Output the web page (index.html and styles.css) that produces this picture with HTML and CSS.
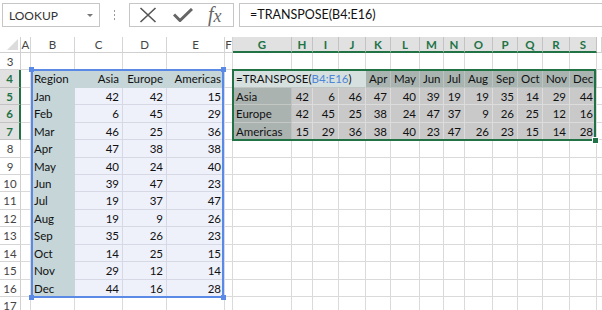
FILE: index.html
```html
<!DOCTYPE html>
<html>
<head>
<meta charset="utf-8">
<link rel="stylesheet" href="styles.css">
</head>
<body>
<div class="fbar">
  <div class="namebox"><span>LOOKUP</span><span class="caret"></span></div>
  <div class="grip"><span></span><span></span><span></span></div>
  <div class="btns">
    <svg class="ic-x" width="18" height="16" viewBox="0 0 18 16"><path d="M1.5 1 L16.5 15 M16.5 1 L1.5 15" stroke="#555" stroke-width="1.6" fill="none"/></svg>
    <svg class="ic-ok" width="20" height="14" viewBox="0 0 20 14"><path d="M1 6.5 L7 12.5 L19 1" stroke="#666" stroke-width="3" fill="none"/></svg>
    <span class="fx">f<i>x</i></span>
  </div>
  <div class="formula">=TRANSPOSE(B4:E16)</div>
</div>
<div class="sheet">
  <div class="corner"><span class="tri"></span></div>
  <div class="ch">A</div><div class="ch">B</div><div class="ch">C</div><div class="ch">D</div><div class="ch">E</div><div class="ch">F</div>
  <div class="ch sel">G</div><div class="ch sel">H</div><div class="ch sel">I</div><div class="ch sel">J</div><div class="ch sel">K</div><div class="ch sel">L</div><div class="ch sel">M</div><div class="ch sel">N</div><div class="ch sel">O</div><div class="ch sel">P</div><div class="ch sel">Q</div><div class="ch sel">R</div><div class="ch sel">S</div><div class="ch"></div>

  <div class="rh">3</div><div></div><div></div><div></div><div></div><div></div><div></div><div></div><div></div><div></div><div></div><div></div><div></div><div></div><div></div><div></div><div></div><div></div><div></div><div></div><div></div>

  <div class="rh sel">4</div><div></div><div class="lb">Region</div><div class="lb hd n">Asia</div><div class="lb hd n">Europe</div><div class="lb hd n">Americas</div><div></div>
  <div class="fe">=TRANSPOSE(<span class="ref">B4:E16</span>)</div>
  <div class="rm">Apr</div><div class="rm">May</div><div class="rm">Jun</div><div class="rm">Jul</div><div class="rm">Aug</div><div class="rm">Sep</div><div class="rm">Oct</div><div class="rm">Nov</div><div class="rm">Dec</div><div></div>

  <div class="rh sel">5</div><div></div><div class="lb">Jan</div><div class="ld n">42</div><div class="ld n">42</div><div class="ld n">15</div><div></div>
  <div class="rl">Asia</div><div class="rd n">42</div><div class="rd n">6</div><div class="rd n">46</div><div class="rd n">47</div><div class="rd n">40</div><div class="rd n">39</div><div class="rd n">19</div><div class="rd n">19</div><div class="rd n">35</div><div class="rd n">14</div><div class="rd n">29</div><div class="rd n">44</div><div></div>

  <div class="rh sel">6</div><div></div><div class="lb">Feb</div><div class="ld n">6</div><div class="ld n">45</div><div class="ld n">29</div><div></div>
  <div class="rl">Europe</div><div class="rd n">42</div><div class="rd n">45</div><div class="rd n">25</div><div class="rd n">38</div><div class="rd n">24</div><div class="rd n">47</div><div class="rd n">37</div><div class="rd n">9</div><div class="rd n">26</div><div class="rd n">25</div><div class="rd n">12</div><div class="rd n">16</div><div></div>

  <div class="rh sel">7</div><div></div><div class="lb">Mar</div><div class="ld n">46</div><div class="ld n">25</div><div class="ld n">36</div><div></div>
  <div class="rl">Americas</div><div class="rd n">15</div><div class="rd n">29</div><div class="rd n">36</div><div class="rd n">38</div><div class="rd n">40</div><div class="rd n">23</div><div class="rd n">47</div><div class="rd n">26</div><div class="rd n">23</div><div class="rd n">15</div><div class="rd n">14</div><div class="rd n">28</div><div></div>

  <div class="rh">8</div><div></div><div class="lb">Apr</div><div class="ld n">47</div><div class="ld n">38</div><div class="ld n">38</div><div></div><div></div><div></div><div></div><div></div><div></div><div></div><div></div><div></div><div></div><div></div><div></div><div></div><div></div><div></div>

  <div class="rh">9</div><div></div><div class="lb">May</div><div class="ld n">40</div><div class="ld n">24</div><div class="ld n">40</div><div></div><div></div><div></div><div></div><div></div><div></div><div></div><div></div><div></div><div></div><div></div><div></div><div></div><div></div><div></div>

  <div class="rh">10</div><div></div><div class="lb">Jun</div><div class="ld n">39</div><div class="ld n">47</div><div class="ld n">23</div><div></div><div></div><div></div><div></div><div></div><div></div><div></div><div></div><div></div><div></div><div></div><div></div><div></div><div></div><div></div>

  <div class="rh">11</div><div></div><div class="lb">Jul</div><div class="ld n">19</div><div class="ld n">37</div><div class="ld n">47</div><div></div><div></div><div></div><div></div><div></div><div></div><div></div><div></div><div></div><div></div><div></div><div></div><div></div><div></div><div></div>

  <div class="rh">12</div><div></div><div class="lb">Aug</div><div class="ld n">19</div><div class="ld n">9</div><div class="ld n">26</div><div></div><div></div><div></div><div></div><div></div><div></div><div></div><div></div><div></div><div></div><div></div><div></div><div></div><div></div><div></div>

  <div class="rh">13</div><div></div><div class="lb">Sep</div><div class="ld n">35</div><div class="ld n">26</div><div class="ld n">23</div><div></div><div></div><div></div><div></div><div></div><div></div><div></div><div></div><div></div><div></div><div></div><div></div><div></div><div></div><div></div>

  <div class="rh">14</div><div></div><div class="lb">Oct</div><div class="ld n">14</div><div class="ld n">25</div><div class="ld n">15</div><div></div><div></div><div></div><div></div><div></div><div></div><div></div><div></div><div></div><div></div><div></div><div></div><div></div><div></div><div></div>

  <div class="rh">15</div><div></div><div class="lb">Nov</div><div class="ld n">29</div><div class="ld n">12</div><div class="ld n">14</div><div></div><div></div><div></div><div></div><div></div><div></div><div></div><div></div><div></div><div></div><div></div><div></div><div></div><div></div><div></div>

  <div class="rh">16</div><div></div><div class="lb">Dec</div><div class="ld n">44</div><div class="ld n">16</div><div class="ld n">28</div><div></div><div></div><div></div><div></div><div></div><div></div><div></div><div></div><div></div><div></div><div></div><div></div><div></div><div></div><div></div>

  <div class="rh">17</div><div></div><div></div><div></div><div></div><div></div><div></div><div></div><div></div><div></div><div></div><div></div><div></div><div></div><div></div><div></div><div></div><div></div><div></div><div></div><div></div>

  <div class="box-blue"><span class="h tl"></span><span class="h tr"></span><span class="h bl"></span><span class="h br"></span></div>
  <div class="box-green"><span class="gh"></span></div>
</div>
</body>
</html>
```

FILE: styles.css
```css
* { box-sizing: border-box; margin: 0; padding: 0; }
body {
  width: 602px;
  height: 310px;
  overflow: hidden;
  background: #fff;
  font-family: Lato, "Liberation Sans", sans-serif;
  color: #111;
}

/* formula bar */
.fbar {
  height: 37px;
  display: flex;
  align-items: flex-start;
  padding: 3px 0 0 2px;
}
.namebox {
  width: 98px;
  height: 24px;
  border: 1px solid #c6c6c6;
  display: flex;
  align-items: center;
  justify-content: space-between;
  padding: 0 6px 0 6px;
  font-size: 12px;
  color: #333;
}
.caret {
  width: 0;
  height: 0;
  border-left: 3px solid transparent;
  border-right: 3px solid transparent;
  border-top: 3px solid #777;
}
.grip {
  width: 29px;
  height: 24px;
  display: flex;
  flex-direction: column;
  align-items: center;
  justify-content: center;
  gap: 2px;
}
.grip span {
  width: 1px;
  height: 2px;
  background: #9a9a9a;
}
.btns {
  width: 105px;
  height: 24px;
  border: 1px solid #c6c6c6;
  display: flex;
  align-items: center;
  padding-left: 9px;
}
.ic-x { margin-right: 16px; }
.ic-ok { margin-right: 15px; }
.fx {
  font-family: "Liberation Serif", serif;
  font-style: italic;
  font-size: 20px;
  color: #666;
  line-height: 1;
  margin-top: -2px;
}
.fx i { font-size: 18px; position: relative; top: 1px; }
.formula {
  flex: 1;
  height: 24px;
  margin-left: 5px;
  border: 1px solid #c6c6c6;
  border-right: none;
  padding-left: 10px;
  font-size: 12.5px;
  line-height: 22px;
  color: #111;
}

/* sheet */
.sheet {
  position: relative;
  display: grid;
  grid-template-columns: 21px 10px 44px 48px 44px 58px 8px 59px 21px 26px 27px 25px 29px 24px 21px 28px 25px 25px 27px 27px 5px;
  grid-template-rows: 16px 17px 18px 17px 18px 17px 18px 17px 17px 18px 17px 18px 17px 18px 17px 17px;
  font-size: 11.5px;
}
:where(.sheet > div) {
  border-right: 1px solid #dadada;
  border-bottom: 1px solid #dadada;
  background: #fff;
  padding: 1px 3px 0 3px;
  line-height: 16px;
  white-space: nowrap;
  overflow: hidden;
}
.sheet > .n { text-align: right; }

.sheet > .corner {
  position: relative;
  border-right: 1px solid #d0d0d0;
  border-bottom: 1px solid #d0d0d0;
}
.tri {
  position: absolute;
  right: 2px;
  bottom: 2px;
  width: 0;
  height: 0;
  border-left: 11px solid transparent;
  border-bottom: 11px solid #dcdcdc;
}
.sheet > .ch {
  text-align: center;
  padding: 0;
  line-height: 15px;
  font-size: 11.5px;
  color: #444;
  border-right: 1px solid #d5d5d5;
  border-bottom: 1px solid #d0d0d0;
}
.sheet > .ch.sel {
  background: #e1e1e1;
  color: #217346;
  font-weight: bold;
  border-right: 1px solid #c3c3c3;
  border-bottom: 2px solid #217346;
}
.sheet > .rh {
  text-align: center;
  padding: 1px 0 0 0;
  color: #444;
  font-size: 11.5px;
  border-right: 1px solid #d0d0d0;
  border-bottom: 1px solid #d5d5d5;
}
.sheet > .rh.sel {
  background: #e1e1e1;
  color: #217346;
  font-weight: bold;
  border-right: 2px solid #217346;
  border-bottom: 1px solid #c3c3c3;
}

/* left source range */
.sheet > .lb {
  background: #c5d5d8;
  border-bottom-color: #c5d5d8;
  border-right-color: #c5d5d8;
}
.sheet > .ld {
  background: #eef0fa;
  border-right-color: #d6d9e3;
  border-bottom-color: #d6d9e3;
}

/* right result range */
.sheet > .fe {
  grid-column: span 4;
  background: #d5e0df;
  border-right-color: #d5e0df;
  border-bottom-color: #c0c6c3;
  padding-left: 3px;
}
.ref { color: #4f86d8; }
.sheet > .rm {
  background: #a9b4b0;
  border-right-color: #bcc4c1;
  border-bottom-color: #bcc4c1;
  padding-left: 3px;
  padding-right: 1px;
}
.sheet > .rl {
  background: #abb3b0;
  border-right-color: #bcc2bf;
  border-bottom-color: #c3c8c5;
}
.sheet > .rd {
  background: #c9c9c9;
  border-right-color: #dcdcdc;
  border-bottom-color: #dcdcdc;
}

/* selection overlays */
.sheet > .box-blue {
  position: absolute;
  left: 31px;
  top: 32px;
  width: 193px;
  height: 229px;
  border: 2px solid #5b8ae6;
  background: transparent;
  overflow: visible;
  padding: 0;
}
.box-blue .h {
  position: absolute;
  width: 5px;
  height: 5px;
  background: #5b8ae6;
}
.h.tl { left: -4px; top: -4px; }
.h.tr { right: -4px; top: -4px; }
.h.bl { left: -4px; bottom: -4px; }
.h.br { right: -4px; bottom: -4px; }
.sheet > .box-green {
  position: absolute;
  left: 232px;
  top: 32px;
  width: 364px;
  height: 72px;
  border: 2px solid #217346;
  background: transparent;
  overflow: visible;
  padding: 0;
}
.gh {
  position: absolute;
  right: -5px;
  bottom: -5px;
  width: 7px;
  height: 7px;
  background: #217346;
  border: 1px solid #fff;
}
```
